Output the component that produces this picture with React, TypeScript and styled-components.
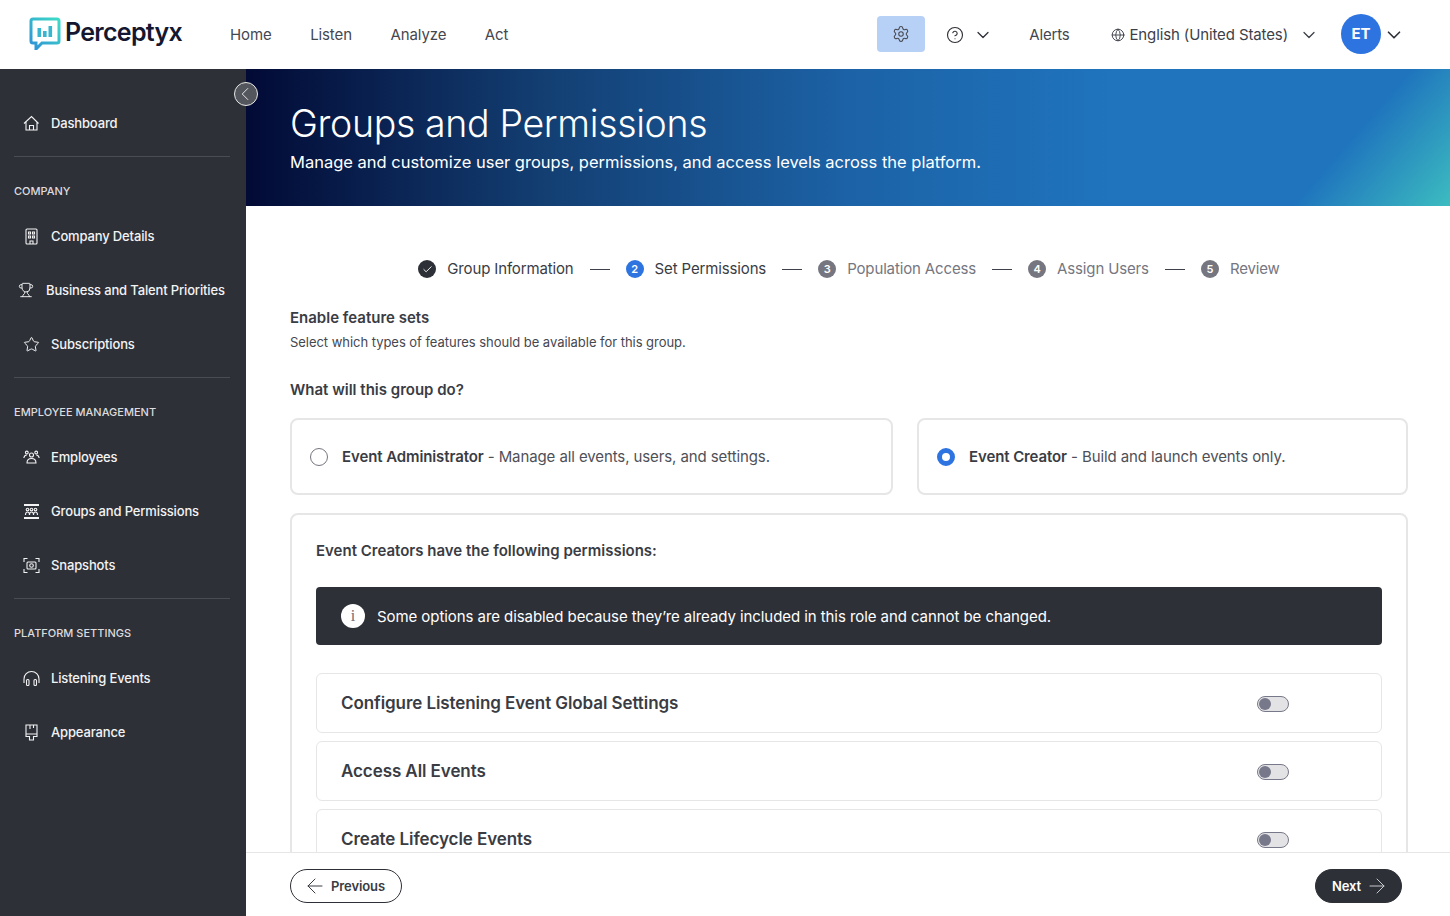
import React from "react";
import styled, { createGlobalStyle } from "styled-components";
import {
  Settings, CircleHelp, ChevronDown, ChevronLeft, Globe, Trophy, Star,
  ArrowLeft, ArrowRight, Check,
} from "lucide-react";

const FONT = `"Inter", "Liberation Sans", sans-serif`;
const DARK = "#2e3038";

const Global = createGlobalStyle`
  html, body { margin: 0; padding: 0; height: 100%; overflow: hidden; background: #fff; }
  body { font-family: ${FONT}; color: ${DARK}; -webkit-font-smoothing: antialiased; }
  #root { height: 100%; }
  * { box-sizing: border-box; }
`;

const Page = styled.div`
  height: 916px; width: 1450px; display: flex; flex-direction: column; position: relative;
`;
const Header = styled.header`
  height: 69px; flex: none; display: flex; align-items: center; padding: 0 45px 0 29px; background: #fff;
`;
const Logo = styled.div`display: flex; align-items: center; gap: 4px; width: 201px; margin-top: -3px;`;
const LogoWord = styled.span`
  font-size: 25px; font-weight: 600; color: #14172f; letter-spacing: -0.7px; line-height: 32px; margin-top: -2px;
`;
const Nav = styled.nav`display: flex; gap: 38.5px; flex: 1;`;
const NavLink = styled.span`font-size: 15px; color: #45474f; letter-spacing: -0.1px;`;
const Tools = styled.div`display: flex; align-items: center;`;
const GearBtn = styled.div`
  width: 48px; height: 36px; border-radius: 4px; background: #b7d0f5; color: #45474f; margin-top: -2px;
  display: flex; align-items: center; justify-content: center; margin-right: 21px;
`;
const HelpWrap = styled.div`display: flex; align-items: center; gap: 9px; color: ${DARK}; margin-right: 36px;`;
const Alerts = styled.span`font-size: 15px; color: #45474f; letter-spacing: -0.2px; margin-right: 42px;`;
const Lang = styled.div`display: flex; align-items: center; color: #3d3f48; margin-right: 22px;`;
const LangText = styled.span`font-size: 15px; margin-left: 4px; margin-right: 11px; letter-spacing: -0.12px;`;
const Avatar = styled.div`
  width: 40px; height: 40px; border-radius: 50%; background: #2e74e0; color: #fff; font-size: 15px; font-weight: 700; margin-top: -2px;
  display: flex; align-items: center; justify-content: center; margin-right: 2px;
`;

const Body = styled.div`flex: 1; min-height: 0; display: flex;`;
const Sidebar = styled.aside`
  width: 246px; flex: none; background: ${DARK}; padding: 27px 16px 0 14px; color: #fff;
`;
const Row = styled.div<{ $indent?: number }>`
  height: 54px; display: flex; align-items: center; gap: ${p => (p.$indent ? 12 : 11)}px;
  padding-left: ${p => p.$indent ?? 9}px; font-size: 13px; font-weight: 500; color: #f3f3f4; white-space: nowrap; letter-spacing: -0.15px;
  svg { flex: none; }
`;
const Divider = styled.hr`margin: 6px 0 0; border: 0; height: 1px; background: #4a4c55;`;
const SectionLabel = styled.div`
  height: 52px; padding-top: 27px; font-size: 11px; line-height: 14px; font-weight: 500; color: #dcdcde; letter-spacing: 0; white-space: nowrap;
`;
const Collapse = styled.button`
  position: absolute; left: 234px; top: 82px; width: 24px; height: 24px; border-radius: 50%;
  border: 1px solid #e8e8e8; background: #54565d; color: #f2f2f2; padding: 0 2px 0 0;
  display: flex; align-items: center; justify-content: center;
  svg { flex: none; }
`;

const Main = styled.main`flex: 1; min-width: 0; display: flex; flex-direction: column;`;
const Banner = styled.section`
  height: 137px; flex: none; padding: 30px 44px 0; color: #fff;
  background:
    linear-gradient(131deg, rgba(60,188,192,0) 88%, #3cbcc0 100%),
    linear-gradient(90deg, #020a35 0%, #133f73 25%, #1c62a6 50%, #1f74bd 72%, #1f74bd 100%);
`;
const BannerTitle = styled.h1`margin: 0; font-size: 37.5px; line-height: 50px; font-weight: 300; letter-spacing: -0.35px;`;
const BannerSub = styled.p`margin: 1px 0 0; font-size: 16.5px; line-height: 24px; font-weight: 400; letter-spacing: 0;`;

const Scroll = styled.div`flex: 1; min-height: 0; overflow: hidden; padding: 0 42px 0 44px;`;
const Steps = styled.ol`
  list-style: none; margin: 0; padding: 54px 0 0; height: 102px; display: flex; align-items: flex-start; justify-content: center; gap: 16px;
`;
const Step = styled.li`display: flex; align-items: center; gap: 11px;`;
const StepDot = styled.span<{ $bg: string }>`
  width: 18px; height: 18px; border-radius: 50%; background: ${p => p.$bg}; color: #fff; font-size: 11px; font-weight: 600;
  display: flex; align-items: center; justify-content: center;
`;
const StepName = styled.span<{ $muted?: boolean }>`
  font-size: 15px; line-height: 18px; letter-spacing: -0.14px; color: ${p => (p.$muted ? "#75767f" : "#3a3c44")};
`;
const StepDash = styled.span`width: 20px; height: 1px; background: #3f414a; margin-top: 9px;`;

const Heading = styled.h2`margin: 0; font-size: 15px; line-height: 20px; font-weight: 600; color: #3a3c44; letter-spacing: 0;`;
const Hint = styled.p`margin: 4px 0 0; font-size: 13px; line-height: 20px; color: #45474f; letter-spacing: -0.04px;`;
const Question = styled(Heading)`margin-top: 28px;`;

const Choices = styled.div`display: grid; grid-template-columns: 603px 491px; gap: 24px; margin-top: 18px;`;
const Choice = styled.label`
  height: 77px; border: 2px solid #e6e6e6; border-radius: 8px; display: flex; align-items: center; gap: 14px; padding-left: 18px;
  font-size: 15px; color: #4e5058; letter-spacing: -0.1px; white-space: nowrap;
  b { font-weight: 600; color: #3a3c44; }
`;
const Radio = styled.span<{ $on?: boolean }>`
  width: 18px; height: 18px; border-radius: 50%; flex: none; background: #fff;
  border: ${p => (p.$on ? "5px solid #2e74e0" : "1px solid #75767f")};
`;
const Panel = styled.section`
  margin-top: 18px; border: 2px solid #e6e6e6; border-radius: 8px 8px 0 0; padding: 25px 24px 0; height: 400px;
`;
const PanelTitle = styled(Heading)`line-height: 22px;`;
const Alert = styled.div`
  margin-top: 25px; height: 58px; border-radius: 4px; background: ${DARK}; color: #fff; display: flex; align-items: center; gap: 12px;
  padding-left: 25px; font-size: 15px; letter-spacing: -0.07px;
`;
const AlertIcon = styled.span`
  width: 24px; height: 24px; border-radius: 50%; background: #fff; color: #6a6b73; display: flex; align-items: center; justify-content: center;
  font-family: "Liberation Serif", serif; font-size: 16px; line-height: 1;
`;
const Perms = styled.div`display: flex; flex-direction: column; gap: 8px; margin-top: 28px;`;
const Perm = styled.div`
  height: 60px; border: 1px solid #e6e6e6; border-radius: 6px; display: flex; align-items: center; justify-content: space-between;
  padding: 0 92px 0 24px; font-size: 17px; font-weight: 600; color: #3a3c44; letter-spacing: -0.08px;
`;
const Toggle = styled.span`
  width: 32px; height: 16px; border-radius: 8px; border: 1px solid #777889; background: #e3e3e5; display: flex; align-items: center; padding-left: 1px; margin-top: 2px;
  &::before { content: ""; width: 12px; height: 12px; border-radius: 50%; background: #777889; }
`;

const Footer = styled.footer`
  height: 64px; flex: none; border-top: 1px solid #e6e6e6; background: #fff; display: flex; align-items: center; justify-content: space-between;
  padding: 2px 48px 0 44px;
`;
const PrevBtn = styled.button`
  width: 112px; height: 34px; border-radius: 17px; border: 1px solid ${DARK}; background: #fff; color: #3a3c44; display: flex; align-items: center; justify-content: flex-start; gap: 4px;
  font-family: ${FONT}; font-size: 13px; font-weight: 600; letter-spacing: -0.1px; padding: 0 0 0 12px;
  svg { flex: none; }
`;
const NextBtn = styled(PrevBtn)`
  width: 87px; background: ${DARK}; color: #fff; padding-left: 16px;
  svg { color: #c9c9cc; }
`;

const ico = { strokeWidth: 1.4 };

const LogoMark = () => (
  <svg width="32" height="33" viewBox="0 0 32 33" fill="none">
    <defs>
      <linearGradient id="lg" x1="0" y1="1" x2="1" y2="0">
        <stop offset="0" stopColor="#2e8fd6" />
        <stop offset="1" stopColor="#3ddcc6" />
      </linearGradient>
    </defs>
    <path d="M4 2h24a2 2 0 0 1 2 2v20a2 2 0 0 1-2 2H13l-6 6v-6H4a2 2 0 0 1-2-2V4a2 2 0 0 1 2-2z" stroke="url(#lg)" strokeWidth="3" fill="#fff" />
    <rect x="8.5" y="11" width="3.6" height="9" fill="#38b5cf" />
    <rect x="14" y="14" width="3.6" height="6" fill="#38b5cf" />
    <rect x="19.500" y="9" width="3.6" height="11" fill="#38b5cf" />
  </svg>
);

const Svg = ({ children }: { children: React.ReactNode }) => (
  <svg width="17" height="17" viewBox="0 0 17 17" fill="none" stroke="currentColor" strokeWidth="1.1">{children}</svg>
);
const HomeIco = () => <Svg><path d="M1 8.500 8.500 1.500l7 7M3 7v8h11V7M6.500 15v-4.500h4V15" /></Svg>;
const BuildingIco = () => <Svg><rect x="3" y="1" width="11" height="15" rx="1" /><path d="M5.500 4h2v2h-2zM9.500 4h2v2h-2zM5.500 8h2v2h-2zM9.500 8h2v2h-2zM7 16v-3h3v3" /></Svg>;
const PeopleIco = () => <Svg><circle cx="8.500" cy="6" r="2" /><circle cx="3.800" cy="3.500" r="1.400" /><circle cx="13.200" cy="3.500" r="1.400" /><path d="M4 14c0-3 2-4.500 4.500-4.500S13 11 13 14zM.8 9c.4-2 1.500-3 3-3M16.200 9c-.4-2-1.500-3-3-3" /></Svg>;
const GroupsIco = () => <Svg><path d="M1 2h15M1 15h15" strokeWidth="2" /><circle cx="4.500" cy="6.500" r="1.300" /><circle cx="8.500" cy="6.500" r="1.300" /><circle cx="12.500" cy="6.500" r="1.300" /><path d="M2.500 12c0-2 1-3 2-3s2 1 2 3M6.500 12c0-2 1-3 2-3s2 1 2 3M10.500 12c0-2 1-3 2-3s2 1 2 3" /></Svg>;
const SnapIco = () => <Svg><path d="M1 5V1.500h3.500M12.500 1.500H16V5M1 12v3.500h3.500M12.500 15.500H16V12" /><rect x="4" y="5" width="9" height="7" rx="1" /><circle cx="8.500" cy="8.500" r="1.800" /></Svg>;
const HeadIco = () => <Svg><path d="M1 13V9a7.500 7.500 0 0 1 15 0v4" /><rect x="3.500" y="9.500" width="2.500" height="6" rx="1" /><rect x="11" y="9.500" width="2.500" height="6" rx="1" /></Svg>;
const BrushIco = () => <Svg><path d="M3 1h11v9H3zM3 10h11v2.500h-3.500V16h-4v-3.500H3zM7 1v4M10.500 1v3" /></Svg>;

export default function App() {
  return (
    <Page>
      <Global />
      <Header>
        <Logo><LogoMark /><LogoWord>Perceptyx</LogoWord></Logo>
        <Nav>
          <NavLink>Home</NavLink><NavLink>Listen</NavLink><NavLink>Analyze</NavLink><NavLink>Act</NavLink>
        </Nav>
        <Tools>
          <GearBtn><Settings size={18} strokeWidth={1.4} /></GearBtn>
          <HelpWrap><CircleHelp size={18} strokeWidth={1.5} /><ChevronDown size={20} strokeWidth={1.5} /></HelpWrap>
          <Alerts>Alerts</Alerts>
          <Lang><Globe size={14} strokeWidth={1.6} /><LangText>English (United States)</LangText><ChevronDown size={20} strokeWidth={1.5} /></Lang>
          <Avatar>ET</Avatar>
          <ChevronDown size={22} strokeWidth={1.8} color={DARK} />
        </Tools>
      </Header>
      <Body>
        <Sidebar>
          <Row><HomeIco />Dashboard</Row>
          <Divider />
          <SectionLabel>COMPANY</SectionLabel>
          <Row><BuildingIco />Company Details</Row>
          <Row $indent={4}><Trophy {...ico} size={16} />Business and Talent Priorities</Row>
          <Row><Star {...ico} size={17} />Subscriptions</Row>
          <Divider />
          <SectionLabel>EMPLOYEE MANAGEMENT</SectionLabel>
          <Row><PeopleIco />Employees</Row>
          <Row><GroupsIco />Groups and Permissions</Row>
          <Row><SnapIco />Snapshots</Row>
          <Divider />
          <SectionLabel>PLATFORM SETTINGS</SectionLabel>
          <Row><HeadIco />Listening Events</Row>
          <Row><BrushIco />Appearance</Row>
        </Sidebar>
        <Main>
          <Banner>
            <BannerTitle>Groups and Permissions</BannerTitle>
            <BannerSub>Manage and customize user groups, permissions, and access levels across the platform.</BannerSub>
          </Banner>
          <Scroll>
            <Steps>
              <Step><StepDot $bg={DARK}><Check size={11} strokeWidth={2} /></StepDot><StepName>Group Information</StepName></Step>
              <StepDash />
              <Step><StepDot $bg="#2e74e0">2</StepDot><StepName>Set Permissions</StepName></Step>
              <StepDash />
              <Step><StepDot $bg="#75767f">3</StepDot><StepName $muted>Population Access</StepName></Step>
              <StepDash />
              <Step><StepDot $bg="#75767f">4</StepDot><StepName $muted>Assign Users</StepName></Step>
              <StepDash />
              <Step><StepDot $bg="#75767f">5</StepDot><StepName $muted>Review</StepName></Step>
            </Steps>
            <Heading>Enable feature sets</Heading>
            <Hint>Select which types of features should be available for this group.</Hint>
            <Question>What will this group do?</Question>
            <Choices>
              <Choice><Radio /><span><b>Event Administrator</b> - Manage all events, users, and settings.</span></Choice>
              <Choice><Radio $on /><span><b>Event Creator</b> - Build and launch events only.</span></Choice>
            </Choices>
            <Panel>
              <PanelTitle>Event Creators have the following permissions:</PanelTitle>
              <Alert><AlertIcon>i</AlertIcon>Some options are disabled because they’re already included in this role and cannot be changed.</Alert>
              <Perms>
                <Perm>Configure Listening Event Global Settings<Toggle /></Perm>
                <Perm>Access All Events<Toggle /></Perm>
                <Perm>Create Lifecycle Events<Toggle /></Perm>
              </Perms>
            </Panel>
          </Scroll>
          <Footer>
            <PrevBtn><ArrowLeft size={24} strokeWidth={1} />Previous</PrevBtn>
            <NextBtn>Next<ArrowRight size={24} strokeWidth={1} /></NextBtn>
          </Footer>
        </Main>
      </Body>
      <Collapse><ChevronLeft size={22} strokeWidth={1} /></Collapse>
    </Page>
  );
}
